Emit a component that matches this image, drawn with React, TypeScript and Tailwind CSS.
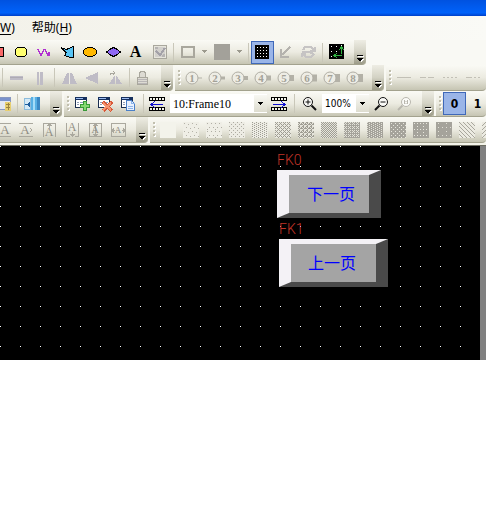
import React from 'react';

type ChildrenProps = { children?: React.ReactNode };

const GRAY = '#a9a79d';
const PALE = '#bfbcc6';

const Icon: React.FC<ChildrenProps> = ({ children }) => (
  <svg viewBox="0 0 17 16" className="h-4 w-[17px] shrink-0" fill="none" shapeRendering="crispEdges" aria-hidden="true">
    {children}
  </svg>
);

const Tool: React.FC<ChildrenProps & { label: string; active?: boolean; className?: string }> = ({ label, active, className = '', children }) => (
  <button
    type="button"
    aria-label={label}
    className={`flex h-[23px] w-[23px] shrink-0 items-center justify-center ${active ? 'bg-[#9ab5e8] outline -outline-offset-1 outline-[#3f68b8]' : ''} ${className}`}
  >
    {children}
  </button>
);

const Caret: React.FC<{ label: string }> = ({ label }) => (
  <button type="button" aria-label={label} className="flex h-[23px] w-3 shrink-0 items-center justify-center">
    <svg viewBox="0 0 6 4" className="h-1 w-1.5" shapeRendering="crispEdges">
      <path d="M0 0h5L2.5 3z" fill="#9c9a8e" />
    </svg>
  </button>
);

const Sep: React.FC<{ wide?: boolean }> = ({ wide }) => (
  <div className={`h-[19px] w-px shrink-0 bg-[#c9c7b9] ${wide ? 'mx-[3px]' : 'mx-[2px]'}`} />
);

const Grip = () => (
  <svg viewBox="0 0 7 16" className="h-4 w-[7px] shrink-0" shapeRendering="crispEdges" aria-hidden="true">
    {[0, 4, 8, 12].map((y) => (
      <g key={y}>
        <rect x="4" y={y + 1} width="2" height="2" fill="#fff" />
        <rect x="3" y={y} width="2" height="2" fill="#c1bfae" />
      </g>
    ))}
  </svg>
);

const Overflow = () => (
  <button
    type="button"
    aria-label="Toolbar options"
    className="ml-[6px] flex h-full w-3 shrink-0 items-end justify-center rounded-br-sm bg-linear-to-b from-[#eeede4] via-[#d3d2c4] to-[#9c9b88] pb-[2px]"
  >
    <svg viewBox="0 0 8 8" className="h-2 w-2" shapeRendering="crispEdges">
      <path d="M2 2h6v1H2zM4 5h4v1H7v1H6v1H5z" fill="#fff" />
      <path d="M1 1h6v1H1zM1 4h6v1H6v1H5v1H3V6H2V5H1z" fill="#000" />
    </svg>
  </button>
);

const Bar: React.FC<ChildrenProps & { grow?: boolean }> = ({ grow, children }) => (
  <div
    role="toolbar"
    className={`flex h-full items-center rounded-br-sm border-b border-[#a3a28e] bg-linear-to-b from-[#fafaf5] via-[#ecebe1] to-[#c6c5b3] ${grow ? 'min-w-0 flex-1 overflow-hidden' : 'shrink-0'}`}
  >
    {children}
  </div>
);

const Row: React.FC<ChildrenProps> = ({ children }) => (
  <div className="flex h-[26px] gap-[2px] overflow-hidden bg-[#f8f8f2]">{children}</div>
);

const Film: React.FC<{ next?: boolean }> = ({ next }) => (
  <Icon>
    <path d="M0 1h16v4H0zM0 11h16v4H0z" fill="#000" />
    {[1, 4, 7, 10, 13].map((x) => (
      <path key={x} d={`M${x} 2h2v2h-2zM${x} 12h2v2h-2z`} fill="#f4f4ec" />
    ))}
    <path d="M2 4h12v1H2zM2 11h12v1H2z" fill="#000" />
    <path d={next ? 'M2 8.500h12M10 5l4 3.500-4 3.500' : 'M2 8.500h12M6 5L2 8.500 6 12'} stroke="#1010d0" />
  </Icon>
);

const Windowed: React.FC<ChildrenProps> = ({ children }) => (
  <Icon>
    <path d="M1.500 1.500h11v10h-11z" fill="#fff" stroke="#1c2f50" />
    <path d="M1 1h12v3H1z" fill="#16305e" />
    <path d="M2 2h7v1H2z" fill="#9dbcf0" />
    <path d="M3 6.500h2M3 8.500h2M6 6.500h5" stroke="#8e9db5" />
    {children}
  </Icon>
);

const Magnifier: React.FC<{ color: string; mark: string }> = ({ color, mark }) => (
  <svg viewBox="0 0 17 16" className="h-4 w-[17px]" fill="none" aria-hidden="true">
    {mark === 'plus' ? (
      <>
        <circle cx="7" cy="6" r="4.5" stroke={color} fill="#fbfbf8" />
        <path d="M10.5 9.5L15 14" stroke={color} strokeWidth="2" />
        <path d="M4.5 6h5M7 3.500v5" stroke={color} />
      </>
    ) : (
      <>
        <circle cx="10" cy="6" r="4.500" stroke={color} fill="#fbfbf8" />
        <path d="M6.500 9.500L2 14" stroke={color} strokeWidth="2" />
        <path d={mark === 'minus' ? 'M7.500 6h5' : 'M8.500 4v4M11.500 4v4M10 5v1M10 7v1'} stroke={color} />
      </>
    )}
  </svg>
);

const FrameSelect: React.FC<{ label: string; value: string; className: string }> = ({ label, value, className }) => (
  <div className={`flex h-[19px] shrink-0 items-center bg-white ${className}`}>
    <select aria-label={label} defaultValue={value} className="h-full min-w-0 flex-1 appearance-none bg-white pl-[3px] text-black outline-none">
      <option>{value}</option>
    </select>
    <span className="pointer-events-none flex h-[17px] w-[13px] items-center justify-center bg-linear-to-b from-[#f8f8f3] to-[#dddccf]">
      <svg viewBox="0 0 7 4" className="h-1 w-[7px]" shapeRendering="crispEdges">
        <path d="M1 0h5v1H5v1H4v1H3V2H2V1H1z" fill="#000" />
      </svg>
    </span>
  </div>
);

// node markers: the plug on the right gets bigger with the number
const nodes = [1, 2, 3, 4, 5, 6, 7, 8];

const NodeIcon: React.FC<{ n: number }> = ({ n }) => (
  <svg viewBox="0 0 19 16" className="h-4 w-[19px]" fill="none" aria-hidden="true">
    <path d="M13 8h5" stroke="#b3b1a7" strokeWidth={n === 1 ? 1 : Math.min(n + 1, 8)} />
    <circle cx="8" cy="8" r="6" stroke="#b0aea4" fill="#eeede5" />
    <text x="8" y="12" textAnchor="middle" fontSize="11" fontWeight="700" fontFamily="Liberation Serif, serif" fill="#a3a197">{n}</text>
  </svg>
);

const textFrames = [
  { name: 'Align left', d: 'M5 1.500h11M5 14.500h11', size: 13, x: 10, y: 12 },
  { name: 'Align right', d: 'M1 1.500h14M1 14.500h14M12 6l2 2-2 2', size: 13, x: 7, y: 12 },
  { name: 'Align top', d: 'M2.500 1v14M14.500 1v14M2 1.500h13M8.500 2v4M6.500 4l2-2 2 2', size: 12, x: 8, y: 14 },
  { name: 'Align bottom', d: 'M2.500 1v14M14.500 1v14M8.500 10v4M6.500 12l2 2 2-2M2 14.500h4M11 14.500h4', size: 12, x: 8, y: 9 },
  { name: 'Fit height', d: 'M2.500 1.500h12v13h-12zM8.500 2v12M6.500 4l2-2 2 2M6.500 12l2 2 2-2', size: 10, x: 8, y: 11 },
  { name: 'Fit width', d: 'M1.500 1.500h14v13h-14zM2 8.500h3M12 8.500h3M4 6.500l-2 2 2 2M13 6.500l2 2-2 2', size: 9, x: 8, y: 11 },
];

const fills: { size: number; bg: string; fg: string; d: string }[] = [
  { size: 4, bg: '#f3f3eb', fg: '#f3f3eb', d: '' },
  { size: 8, bg: '#efeee6', fg: '#b5b3a9', d: 'M1 1h1v1H1zM5 2h1v1H5zM3 5h1v1H3zM7 6h1v1H7z' },
  { size: 8, bg: '#efeee6', fg: '#b0aea4', d: 'M1 1h1v1H1zM5 1h1v1H5zM3 5h1v1H3zM7 5h1v1H7zM1 7h1v1H1z' },
  { size: 4, bg: '#edece4', fg: '#aeaca2', d: 'M0 0h1v1H0zM2 2h1v1H2z' },
  { size: 4, bg: '#edece4', fg: '#a09e94', d: 'M0 0h1v1H0zM2 1h1v1H2zM0 2h1v1H0zM2 3h1v1H2z' },
  { size: 4, bg: '#e9e8df', fg: '#9f9d93', d: 'M0 0h1v1H0zM2 0h1v1H2zM1 1h1v1H1zM0 2h1v1H0zM2 2h1v1H2zM3 3h1v1H3z' },
  { size: 4, bg: '#e5e4db', fg: '#9f9d93', d: 'M0 0h2v1H0zM3 1h1v1H3zM1 1h1v1H1zM0 2h1v1H0zM2 2h2v1H2zM1 3h1v1H1z' },
  { size: 2, bg: '#e5e4db', fg: '#9f9d93', d: 'M0 0h1v1H0zM1 1h1v1H1z' },
  { size: 4, bg: '#a5a39b', fg: '#e3e2d9', d: 'M0 0h1v1H0zM2 0h1v1H2zM1 1h1v1H1zM2 2h1v1H2zM0 2h1v1H0z' },
  { size: 4, bg: '#a5a39b', fg: '#e3e2d9', d: 'M0 0h1v1H0zM2 1h1v1H2zM0 2h1v1H0zM2 3h1v1H2z' },
  { size: 4, bg: '#a5a39b', fg: '#e8e7de', d: 'M1 1h1v1H1zM3 3h1v1H3z' },
  { size: 6, bg: '#a5a39b', fg: '#e8e7de', d: 'M1 1h1v1H1zM4 4h1v1H4zM4 1h1v1H4z' },
  { size: 8, bg: '#a5a39b', fg: '#e0dfd6', d: 'M2 1h1v1H2zM6 5h1v1H6zM2 5h1v1H2z' },
  { size: 4, bg: '#ecebe2', fg: '#a9a79d', d: 'M0 0h1v1H0zM1 1h1v1H1zM2 2h1v1H2zM3 3h1v1H3z' },
  { size: 4, bg: '#ecebe2', fg: '#a9a79d', d: 'M3 0h1v1H3zM2 1h1v1H2zM1 2h1v1H1zM0 3h1v1H0z' },
];

const keys = [
  { name: 'FK0', text: '下一页', label: 'h-[18px] pb-[2px]', group: '', button: 'w-[104px] pl-[4px]' },
  { name: 'FK1', text: '上一页', label: 'h-[21px]', group: 'ml-[2px]', button: 'w-[109px] pr-[3px]' },
];

const DrawBar = () => (
  <div className="flex h-[25px] bg-[#f9f9f4]">
    <Bar>
      <Tool label="Rectangle" className="-ml-[13px]">
        <Icon><path d="M2.500 3.500h11v9h-11z" fill="#f86868" stroke="#000" /></Icon>
      </Tool>
      <Tool label="Rounded rectangle">
        <Icon><path d="M4.500 3.500h7l2 2v5l-2 2h-7l-2-2v-5z" fill="#ffff70" stroke="#000" /></Icon>
      </Tool>
      <Tool label="Polyline">
        <Icon><path d="M1 5.500h1l3 6 3-6h1l3 6 2-3M12 8l2 4" stroke="#b030d0" /></Icon>
      </Tool>
      <Tool label="Polygon">
        <Icon><path d="M2 3.500l5 2 3-1 4-2v11h-3l-5-2 1-3z" fill="#58c4f4" stroke="#000" /></Icon>
      </Tool>
      <Tool label="Ellipse">
        <Icon><ellipse cx="8" cy="8" rx="6.500" ry="4.500" fill="#ffb800" stroke="#000" /></Icon>
      </Tool>
      <Tool label="Diamond">
        <Icon><path d="M1.500 8l4-3 3-1.500 3 1.500 4 3-4 3-3 1.500-3-1.500z" fill="#8f68f4" stroke="#000" /></Icon>
      </Tool>
      <Tool label="Text" className="pr-[2px] font-['Liberation_Serif',serif] text-[16px] leading-none font-bold text-black">A</Tool>
      <Tool label="Picture">
        <Icon>
          <path d="M2.500 1.500h13v13h-13z" fill="#e6e5dc" stroke={GRAY} />
          <path d="M4 3h10v10H4z" fill="#d2d0cc" />
          <path d="M5 7l4 4 5-7" stroke="#a3a1a8" strokeWidth="2" />
          <path d="M4 3h3v2H4zM12 10h2v3h-3z" fill="#b5b3b2" />
        </Icon>
      </Tool>
      <Sep />
      <Tool label="Line colour">
        <Icon><path d="M3 3h12v10H3z" stroke={GRAY} strokeWidth="2" /></Icon>
      </Tool>
      <Caret label="Line colours" />
      <Tool label="Fill colour">
        <Icon><path d="M0 0h16v16H0z" fill="#a3a19a" /></Icon>
      </Tool>
      <Caret label="Fill colours" />
      <Sep />
      <Tool label="Grid" active>
        <Icon>
          <path d="M1 1h14v14H1z" fill="#000" />
          {[3, 6, 9, 12].map((y) => (
            <path key={y} d={`M3 ${y}h1v1h-1zM6 ${y}h1v1h-1zM9 ${y}h1v1h-1zM12 ${y}h1v1h-1z`} fill="#fff" />
          ))}
        </Icon>
      </Tool>
      <Tool label="Snap">
        <Icon><path d="M13 3L5 11M4 5v8h8" stroke="#b5b3ae" strokeWidth="2" /></Icon>
      </Tool>
      <Tool label="Refresh">
        <Icon>
          <path d="M3 6l2-3h6l3 3M10 6.500h5V3M2 8h8l3 2M14 10l-3 3H6l-3-3M6 10H2v3" stroke="#c6c4c4" strokeWidth="2" />
        </Icon>
      </Tool>
      <Sep />
      <Tool label="Fit page">
        <Icon>
          <path d="M1 0h15v15H1z" fill="#000" />
          <path d="M3 2h1v1H3zM8 2h1v1H8zM13 1h1v1h-1zM3 7h1v1H3zM3 12h1v1H3zM8 7h1v1H8z" fill="#fff" />
          <path d="M13.500 3v7M11 6l2.500-3L16 6M6 11.500h8M9 9l-3 2.500L9 14" stroke="#30b040" />
        </Icon>
      </Tool>
      <Overflow />
    </Bar>
  </div>
);

const ArrangeBar = () => (
  <Row>
    <Bar>
      <Sep />
      <Tool label="Same width"><Icon><path d="M2 6h13v4H2z" fill={PALE} /><path d="M2 7h13v1H2z" fill="#aeabb4" /></Icon></Tool>
      <Tool label="Same height"><Icon><path d="M6 2h2v13H6zM9 2h3v13H9z" fill={PALE} /></Icon></Tool>
      <Sep wide />
      <Tool label="Flip horizontal"><Icon><path d="M8 3v11H1l5-11zM9 3v11h7L11 3z" fill={PALE} /><path d="M8 3h1v11H8z" fill="#eeede4" /></Icon></Tool>
      <Tool label="Flip vertical"><Icon><path d="M14 2v5H3L2 8l1 1h11v5L1 8z" fill={PALE} /><path d="M14 2v12L1 8z" fill={PALE} /></Icon></Tool>
      <Tool label="Rotate">
        <Icon>
          <path d="M8 5v9H2zM9 5l6 9H9z" fill={PALE} />
          <path d="M3 5V3h5M6 1l2 2-2 2" stroke={GRAY} />
        </Icon>
      </Tool>
      <Sep />
      <Tool label="Lock" className="pr-[3px]">
        <Icon>
          <path d="M5.500 7V3l2-2h2l2 2v4M3.500 7.500h10v7h-10z" fill="#dddbd3" stroke={GRAY} />
          <path d="M4 9.500h9M4 11.500h9M4 13.500h9" stroke="#b9b6b6" />
        </Icon>
      </Tool>
      <Overflow />
    </Bar>
    <Bar>
      <Grip />
      {nodes.map((n) => (
        <Tool key={n} label={`Node ${n}`}><NodeIcon n={n} /></Tool>
      ))}
      <Overflow />
    </Bar>
    <Bar grow>
      <Grip />
      {['none', '6 2', '2 2', '6 2 2 2'].map((dash) => (
        <Tool key={dash} label={`Line style ${dash}`}>
          <Icon><path d="M1 7.500h14" stroke="#c2c0b6" strokeDasharray={dash} /></Icon>
        </Tool>
      ))}
    </Bar>
  </Row>
);

const ViewBar = () => (
  <Row>
    <Bar>
      <Tool label="Properties" className="-ml-[9px]">
        <Icon>
          <path d="M2.500 1.500h14v12h-14z" fill="#e4e8f2" stroke="#8898c0" />
          <path d="M3 2h13v3H3z" fill="#7a92cc" />
          <path d="M11 6h6v9h-6z" fill="#e8cf70" />
          <path d="M12 8h4M12 11h4M14 7v7" stroke="#9c8340" />
        </Icon>
      </Tool>
      <Sep wide />
      <Tool label="Panel">
        <Icon>
          <path d="M7 1h9v13H7z" fill="#58b0e4" />
          <path d="M9 1h2v13H9z" fill="#a4dcf8" />
          <path d="M13 1h3v13h-3z" fill="#3b88c4" />
          <path d="M0.500 2.500h6v11h-6z" fill="#d4e9f6" stroke="#8cbcdc" />
          <path d="M6 5v7L3 8.500zM1 8h2v1H1z" fill="#1c5c9c" />
        </Icon>
      </Tool>
      <Overflow />
    </Bar>
    <Bar grow>
      <Grip />
      <Tool label="New window">
        <Windowed>
          <path d="M9 5h4v3h3v4h-3v3H9v-3H6V8h3z" fill="#389a38" />
          <path d="M10 6h2v3h3v2h-3v3h-2v-3H7V9h3z" fill="#84d870" />
        </Windowed>
      </Tool>
      <Tool label="Delete window">
        <Windowed>
          <path d="M6 6l9 9M15 6l-9 9" stroke="#d85838" strokeWidth="4" />
          <path d="M6 7l8 7M14 7l-8 7" stroke="#f49470" strokeWidth="2" />
        </Windowed>
      </Tool>
      <Tool label="Window settings">
        <Windowed>
          <path d="M6.500 4.500h5l3 3v7h-8z" fill="#e8f1ff" stroke="#4a80c8" />
          <path d="M11.500 4.500v3h3M8 10.500h5M8 12.500h5" stroke="#8cb4e8" />
        </Windowed>
      </Tool>
      <Sep wide />
      <Tool label="Previous window" className="pr-[2px]"><Film /></Tool>
      <FrameSelect label="Window" value="10:Frame10" className="w-[97px] font-['Liberation_Serif',serif] text-[12px]" />
      <Tool label="Next window" className="ml-px"><Film next /></Tool>
      <Sep wide />
      <Tool label="Zoom in"><Magnifier color="#111" mark="plus" /></Tool>
      <FrameSelect label="Zoom" value="100%" className="mx-px w-[47px] font-['DejaVu_Sans_Condensed','DejaVu_Sans',sans-serif] text-[10px]" />
      <Tool label="Zoom out"><Magnifier color="#111" mark="minus" /></Tool>
      <Tool label="Actual size"><Magnifier color="#b9b7ae" mark="actual" /></Tool>
      <Overflow />
      <div className="w-[2px] shrink-0 self-stretch bg-[#f8f8f2]" />
      <Grip />
      <Tool label="State 0" active className="font-['DejaVu_Sans_Condensed','DejaVu_Sans',sans-serif] text-[12px] font-bold text-black">0</Tool>
      <Tool label="State 1" className="font-['DejaVu_Sans_Condensed','DejaVu_Sans',sans-serif] text-[12px] font-bold text-black">1</Tool>
    </Bar>
  </Row>
);

const PatternBar = () => (
  <Row>
    <Bar>
      {textFrames.map((f, i) => (
        <Tool key={f.name} label={f.name} className={i === 0 ? '-ml-[8px]' : ''}>
          <Icon>
            <path d={f.d} stroke="#aaa89e" />
            <text x={f.x} y={f.y} textAnchor="middle" fontSize={f.size} fontFamily="Liberation Serif, serif" fill="#8f8d83">A</text>
          </Icon>
        </Tool>
      ))}
      <Overflow />
    </Bar>
    <Bar grow>
      <Grip />
      {fills.map((f, i) => (
        <Tool key={i} label={`Pattern ${i + 1}`}>
          <Icon>
            <defs>
              <pattern id={`fill-${i}`} width={f.size} height={f.size} patternUnits="userSpaceOnUse">
                <rect width={f.size} height={f.size} fill={f.bg} />
                <path d={f.d} fill={f.fg} />
              </pattern>
            </defs>
            <rect x="0" y="0" width="16" height="16" fill={`url(#fill-${i})`} />
          </Icon>
        </Tool>
      ))}
    </Bar>
  </Row>
);

const App: React.FC = () => {
  return (
    <div className="min-h-screen overflow-hidden bg-white font-['Noto_Sans','Noto_Sans_CJK_SC',sans-serif]">
      <header className="h-4 bg-linear-to-b from-[#0052e0] via-[#0062fa] via-80% to-[#0040c8]" />
      <nav className="flex h-6 items-center gap-[17px] bg-linear-to-r from-[#f3f2ea] to-[#fafaf6] text-[12px] text-black">
        <button type="button"><span className="underline underline-offset-2">W</span>)</button>
        <button type="button">帮助(<span className="underline underline-offset-2">H</span>)</button>
      </nav>
      <DrawBar />
      <ArrangeBar />
      <ViewBar />
      <PatternBar />
      <div className="h-[3px] border-b border-[#6e6e62] bg-[#f4f4ea]" />
      <main className="flex bg-black">
        <div className="min-w-0 flex-1 bg-[conic-gradient(from_270deg_at_1px_1px,#fff_90deg,transparent_0)] bg-[length:20px_20px] pt-[6px] pb-[73px] pl-[277px]">
          {keys.map((k) => (
            <div key={k.name} className={k.group}>
              <label htmlFor={k.name} className={`flex items-center font-['Roboto',sans-serif] text-[14px] leading-none font-light text-[#c03428] ${k.label}`}>
                {k.name}
              </label>
              <button
                type="button"
                id={k.name}
                className={`flex h-12 items-center justify-center border-x-[12px] border-y-[5px] border-t-[#f4f2f6] border-r-[#4a4a4a] border-b-[#4a4a4a] border-l-[#f4f2f6] bg-[#a4a4a4] pb-[3px] font-['Noto_Sans_CJK_SC',sans-serif] text-[16px] whitespace-nowrap text-[#0000ff] ${k.button}`}
              >
                {k.text}
              </button>
            </div>
          ))}
        </div>
        <div className="w-[6px] shrink-0 bg-[#808080]" />
      </main>
    </div>
  );
};

export default App;
